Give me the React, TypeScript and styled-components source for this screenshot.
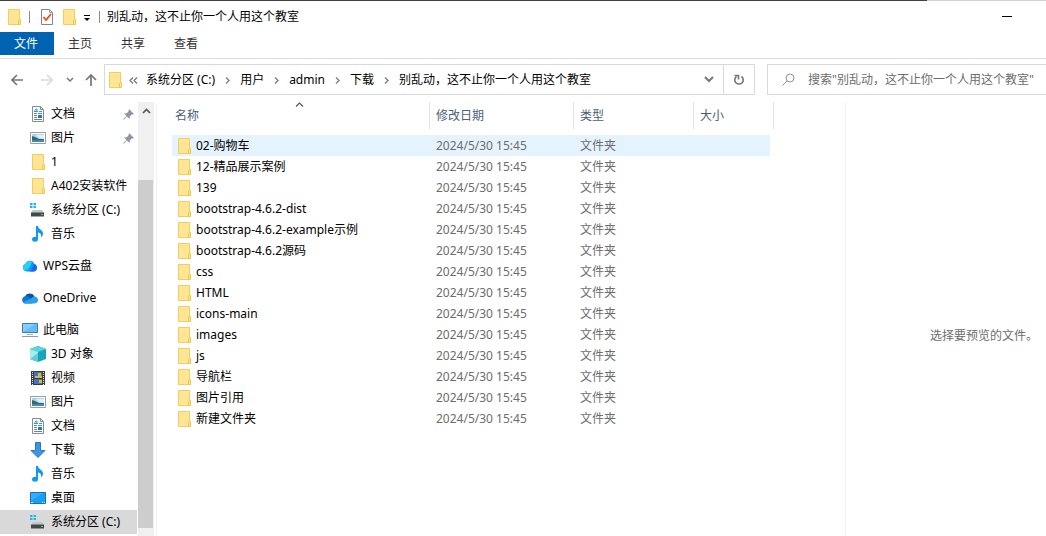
import React from "react";
import styled, { createGlobalStyle } from "styled-components";

const GlobalStyle = createGlobalStyle`
  * { box-sizing: border-box; }
  body {
    margin: 0;
    background: #fff;
    color: #000;
    font: 12px/16px "Noto Sans", "Noto Sans CJK SC", sans-serif;
  }
  button, input { font: inherit; color: inherit; }
  svg { display: block; flex: none; }
`;

const Window = styled.div`
  display: flex;
  flex-direction: column;
  min-height: 100vh;
  overflow: hidden;
`;

const TopEdge = styled.div`
  height: 1px;
  background: #d2d2d2;
  &::before {
    content: "";
    display: block;
    height: 1px;
    margin-right: 119px;
    background: #404040;
  }
`;

const TitleBar = styled.header`
  display: flex;
  align-items: center;
  height: 31px;
  padding-left: 6px;
`;

const Separator = styled.span<{ $left: number; $right: number }>`
  width: 1px;
  height: 12px;
  margin: 0 ${(p) => p.$right}px 0 ${(p) => p.$left}px;
  background: #8c8c8c;
`;

const IconButton = styled.button<{ $width: number; $color?: string }>`
  display: flex;
  align-items: center;
  justify-content: center;
  flex: none;
  width: ${(p) => p.$width}px;
  align-self: stretch;
  padding: 0;
  border: 0;
  background: none;
  color: ${(p) => p.$color ?? "#777"};
`;

const Title = styled.h1`
  flex: 1;
  margin: 0;
  font-size: 12px;
  font-weight: 400;
  white-space: nowrap;
`;

const Ribbon = styled.nav`
  display: flex;
  height: 27px;
  padding-bottom: 3px;
  border-bottom: 1px solid #dadbdc;
`;

const RibbonTab = styled.button<{ $primary?: boolean }>`
  padding: 0 15px 0 14px;
  border: 0;
  background: ${(p) => (p.$primary ? "#0063b1" : "none")};
  color: ${(p) => (p.$primary ? "#fff" : "#333")};
  &:first-child { padding-right: 16px; }
`;

const NavBar = styled.div`
  display: flex;
  height: 43px;
  padding: 5px 0 7px 2px;
`;

const AddressBar = styled.div`
  display: flex;
  flex: 1;
  align-items: center;
  min-width: 0;
  padding-left: 2px;
  border: 1px solid #d9d9d9;
`;

const Crumbs = styled.ol`
  display: flex;
  flex: 1;
  align-items: center;
  min-width: 0;
  margin: 0;
  padding: 0;
  list-style: none;
  white-space: nowrap;
`;

const Crumb = styled.li`
  display: flex;
  align-items: center;
  a { color: #000; text-decoration: none; }
  svg { margin: 2px 8px 0; }
  &:first-child svg { margin-left: 6px; }
`;

const RefreshCell = styled.div`
  display: flex;
  align-self: stretch;
  border-left: 1px solid #d9d9d9;
`;

const SearchBox = styled.label`
  display: flex;
  align-items: center;
  gap: 13px;
  width: 279px;
  margin-left: 12px;
  padding-left: 14px;
  border: 1px solid #d9d9d9;
  border-right: 0;
  input {
    flex: 1;
    min-width: 0;
    padding: 0;
    border: 0;
    outline: 0;
    background: none;
  }
  input::placeholder { color: #6d6d6d; opacity: 1; }
`;

const Body = styled.div`
  display: flex;
  flex: 1;
`;

const Tree = styled.nav`
  width: 138px;
  padding-right: 1px;
`;

const TreeGroup = styled.ul`
  margin: 0 0 8px;
  padding: 0;
  list-style: none;
  &:last-child { margin-bottom: 0; }
`;

const TreeLink = styled.a<{ $root?: boolean; $selected?: boolean }>`
  display: flex;
  align-items: center;
  gap: 5px;
  height: 24px;
  padding: 0 3px 0 ${(p) => (p.$root ? 22 : 30)}px;
  background: ${(p) => (p.$selected ? "#d9d9d9" : "none")};
  color: #000;
  text-decoration: none;
  white-space: nowrap;
`;

const TreeLabel = styled.span`
  flex: 1;
`;

const Scrollbar = styled.div`
  display: flex;
  flex-direction: column;
  width: 16px;
  background: #f0f0f0;
`;

const ScrollUp = styled.button`
  display: flex;
  align-items: center;
  justify-content: center;
  height: 18px;
  padding: 0;
  border: 0;
  background: none;
`;

const Thumb = styled.div`
  flex: 1;
  margin: 60px 1px 8px 0;
  background: #cdcdcd;
`;

const Files = styled.main`
  flex: 1;
  min-width: 0;
  margin-left: 2px;
  padding-left: 15px;
  border-left: 1px solid #f3f3f3;
`;

const FileTable = styled.table`
  width: 602px;
  table-layout: fixed;
  border-collapse: separate;
  border-spacing: 0;
  tbody::before {
    content: "";
    display: block;
    height: 6px;
  }
`;

const HeadCell = styled.th<{ $width: number; $first?: boolean }>`
  position: relative;
  width: ${(p) => p.$width}px;
  height: 27px;
  padding: 0 0 0 ${(p) => (p.$first ? 3 : 6)}px;
  border-right: 1px solid #e2e2e2;
  color: #4c607a;
  font-weight: 400;
  text-align: left;
`;

const SortMark = styled.span`
  position: absolute;
  top: 0;
  left: 50%;
  margin-left: -6px;
`;

const FileRow = styled.tr<{ $active: boolean }>`
  td { background-color: ${(p) => (p.$active ? "#e5f3ff" : "transparent")}; }
`;

const Cell = styled.td`
  height: 21px;
  padding: 0 0 0 6px;
  color: #6d6d6d;
  background-clip: padding-box;
  &:last-child { border-right: 4px solid transparent; }
`;

const NameCell = styled(Cell)`
  padding-left: 4px;
  color: #000;
`;

const FileName = styled.div`
  display: flex;
  align-items: center;
  gap: 4px;
`;

const Preview = styled.aside`
  display: flex;
  align-items: center;
  width: 201px;
  padding: 34px 0 0 84px;
  border-left: 1px solid #f3f3f3;
  color: #6d6d6d;
  white-space: nowrap;
`;

const Icon = ({ children, w = 16, h = 16 }: { children: React.ReactNode; w?: number; h?: number }) => (
  <svg width={w} height={h} viewBox={`0 0 ${w} ${h}`} fill="none" aria-hidden="true">
    {children}
  </svg>
);

const FolderIcon = () => (
  <Icon>
    <path d="M2.5.5h11v15h-11z" fill="#ffe594" stroke="#f0cf5f" />
    <path d="M12.5 15.5v-4l1-1h1v5z" fill="#ffe594" stroke="#e9c64c" />
  </Icon>
);

const CheckedPageIcon = () => (
  <Icon>
    <path d="M2.5.5h8l3 3v12h-11z" fill="#fff" stroke="#858585" />
    <path d="M10.5.5v3h3" stroke="#a0a0a0" />
    <path d="M4.5 8l2.500 3 5-6" stroke="#e8501e" strokeWidth="1.800" />
  </Icon>
);

const DocIcon = () => (
  <Icon>
    <path d="M2.5.5h8l3 3v12h-11z" fill="#fff" stroke="#858b90" />
    <path d="M10.5.5v3h3" stroke="#858b90" />
    <path d="M4 6l2-3h1v3M4 5.500h4M4 7.500h3M8 7.500h4M9 5.500h3" stroke="#3d94c5" />
    <path d="M8 9h4v3h-4z" fill="#2d78b4" />
    <path d="M4 9.500h3M4 11.500h3M4 13.500h8" stroke="#75838e" />
  </Icon>
);

const PictureIcon = () => (
  <Icon>
    <path d="M.5 2.500h15v11H.5z" fill="#fff" stroke="#9a9ea2" />
    <path d="M2 4h12v8H2z" fill="#a9d4f5" />
    <path d="M6 5h8v4l-5-1z" fill="#e2f2fb" />
    <path d="M2 6l3 1 4 2 5 0v1H2z" fill="#366a66" />
    <path d="M2 10h12v2H2z" fill="#4287b9" />
  </Icon>
);

const DriveIcon = () => (
  <Icon>
    <path d="M0 1h2.500v2H0zM3.500 1H6v2H3.500zM0 4h2.500v2H0zM3.500 4H6v2H3.500z" fill="#19b5f1" />
    <path d="M3 8h9l2 3H1z" fill="#c4c7c9" />
    <path d="M1 10.500h13v4H1z" fill="#44484b" />
    <path d="M11 12h2v1h-2z" fill="#43e24b" />
  </Icon>
);

const MusicIcon = () => (
  <Icon>
    <ellipse cx="5" cy="13.200" rx="3" ry="2.500" fill="#1597ea" />
    <path d="M6 0h2c0 3 5 3.500 5 7.500 0 2-.8 3-2 4 .8-3-.7-4.500-3-5V13H6z" fill="#1597ea" />
  </Icon>
);

const WpsIcon = () => (
  <Icon>
    <path d="M5 13.500a4 4 0 0 1-1.500-7.700A4.700 4.700 0 0 1 12.300 6a3.900 3.900 0 0 1-.3 7.500z" fill="#1593fa" />
    <path d="M3.500 5.800A4.700 4.700 0 0 1 10 3.500C8.500 8 7 12 2.500 12.700a4 4 0 0 1 1-6.900z" fill="#27d0f5" />
    <path d="M12.300 6a3.900 3.900 0 0 1-.3 7.500H7c4-1 3-5.500 5.300-7.500z" fill="#1768ee" />
  </Icon>
);

const OneDriveIcon = () => (
  <Icon>
    <path d="M3 7a5 5 0 0 1 9.500 0L8 11z" fill="#0a55a5" />
    <path d="M3.800 13.500A3.700 3.700 0 1 1 6 6.800L13 11l-3 2.500z" fill="#0f78d2" />
    <path d="M1 12.200L9.500 8.200A3.500 3.500 0 1 1 12.500 13.500h-9c-1 0-2-.5-2.500-1.300z" fill="#28a0ea" />
  </Icon>
);

const ComputerIcon = () => (
  <Icon>
    <path d="M.5 1.500h15v9H.5z" fill="#64bdf8" stroke="#3b7fab" />
    <path d="M1 10V2h12z" fill="#83cefb" />
    <path d="M5 12.500h6" stroke="#a4b1ba" />
    <path d="M0 14.500h16" stroke="#8e9ba3" />
  </Icon>
);

const CubeIcon = () => (
  <Icon>
    <path d="M8 0l8 3v10l-8 3-8-3V3z" fill="#18a5bb" />
    <path d="M8 0l8 3-8 3-8-3z" fill="#5bd3e0" />
    <path d="M0 3l8 3v10l-8-3z" fill="#a3edf0" />
    <path d="M0 13l8-6v9z" fill="#60cbd6" />
  </Icon>
);

const VideoIcon = () => (
  <Icon>
    <path d="M1 1h14v14H1z" fill="#3b3b3b" />
    <path d="M4 2h8v6H4zM4 9h8v5H4z" fill="#3975cf" />
    <path d="M8 3h3v3H8zM5 6h7v2H5zM9 10h3v3H9z" fill="#e4b928" />
    <path d="M2.500 2v13M13.500 2v13" stroke="#e8e8e8" strokeDasharray="1 1" />
  </Icon>
);

const DownloadIcon = () => (
  <Icon>
    <path d="M5.500.5h5v8h4.500L8 15.500 1 8.500h4.500z" fill="#3d94e4" stroke="#3077ba" />
  </Icon>
);

const DesktopIcon = () => (
  <Icon>
    <path d="M.5 2.500h15v11H.5z" fill="#1b9cf5" stroke="#0c75bd" />
    <path d="M1 11V3h12z" fill="#35adff" />
    <path d="M1 12.500h2M12 12.500h1M14 12.500h1" stroke="#fff" />
  </Icon>
);

const PinIcon = () => (
  <Icon w={11} h={11}>
    <path d="M6 0l5 5-1.500.5-1 .2-1.700 1.800L6.500 10 4 7.500.7 10.700l-.5-.4L3.500 7 1 4.500l2.700-.3L5.500 2.500z" fill="#8b98a4" />
  </Icon>
);

const Chevron = () => (
  <Icon w={9} h={9}>
    <path d="M3 1.500l3 3-3 3" stroke="#858585" strokeWidth="1.500" />
  </Icon>
);

type TreeItem = { label: string; icon: React.ReactNode; root?: boolean; pinned?: boolean; selected?: boolean };

const tree: TreeItem[][] = [
  [
    { label: "文档", icon: <DocIcon />, pinned: true },
    { label: "图片", icon: <PictureIcon />, pinned: true },
    { label: "1", icon: <FolderIcon /> },
    { label: "A402安装软件", icon: <FolderIcon /> },
    { label: "系统分区 (C:)", icon: <DriveIcon /> },
    { label: "音乐", icon: <MusicIcon /> },
  ],
  [{ label: "WPS云盘", icon: <WpsIcon />, root: true }],
  [{ label: "OneDrive", icon: <OneDriveIcon />, root: true }],
  [
    { label: "此电脑", icon: <ComputerIcon />, root: true },
    { label: "3D 对象", icon: <CubeIcon /> },
    { label: "视频", icon: <VideoIcon /> },
    { label: "图片", icon: <PictureIcon /> },
    { label: "文档", icon: <DocIcon /> },
    { label: "下载", icon: <DownloadIcon /> },
    { label: "音乐", icon: <MusicIcon /> },
    { label: "桌面", icon: <DesktopIcon /> },
    { label: "系统分区 (C:)", icon: <DriveIcon />, selected: true },
  ],
];

const folderTitle = "别乱动，这不止你一个人用这个教室";
const crumbs = ["系统分区 (C:)", "用户", "admin", "下载", folderTitle];

const files = [
  "02-购物车",
  "12-精品展示案例",
  "139",
  "bootstrap-4.6.2-dist",
  "bootstrap-4.6.2-example示例",
  "bootstrap-4.6.2源码",
  "css",
  "HTML",
  "icons-main",
  "images",
  "js",
  "导航栏",
  "图片引用",
  "新建文件夹",
];

export default function App() {
  return (
    <Window lang="zh-CN">
      <GlobalStyle />
      <TopEdge />
      <TitleBar>
        <FolderIcon />
        <Separator $left={7} $right={9} />
        <IconButton $width={16} aria-label="属性"><CheckedPageIcon /></IconButton>
        <IconButton $width={28} aria-label="新建文件夹"><FolderIcon /></IconButton>
        <IconButton $width={8} $color="#000" aria-label="自定义快速访问工具栏">
          <Icon w={8} h={8}>
            <path d="M1 2.500h6" stroke="currentColor" />
            <path d="M1 5h6L4 8z" fill="currentColor" />
          </Icon>
        </IconButton>
        <Separator $left={8} $right={7} />
        <Title>{folderTitle}</Title>
        <IconButton $width={78} $color="#000" aria-label="最小化">
          <Icon w={10} h={1}><path d="M0 .5h10" stroke="currentColor" /></Icon>
        </IconButton>
      </TitleBar>

      <Ribbon aria-label="功能区">
        <RibbonTab $primary>文件</RibbonTab>
        <RibbonTab>主页</RibbonTab>
        <RibbonTab>共享</RibbonTab>
        <RibbonTab>查看</RibbonTab>
      </Ribbon>

      <NavBar>
        <IconButton $width={30} aria-label="返回">
          <Icon w={12} h={12}><path d="M12 6H1M6 1L1 6l5 5" stroke="currentColor" strokeWidth="1.700" /></Icon>
        </IconButton>
        <IconButton $width={30} $color="#d9d9d9" aria-label="前进">
          <Icon w={12} h={12}><path d="M0 6h11M6 1l5 5-5 5" stroke="currentColor" strokeWidth="1.700" /></Icon>
        </IconButton>
        <IconButton $width={16} aria-label="最近浏览的位置">
          <Icon w={8} h={6}><path d="M1 1l3 3 3-3" stroke="currentColor" strokeWidth="1.500" /></Icon>
        </IconButton>
        <IconButton $width={26} aria-label="上移">
          <Icon w={12} h={12}><path d="M6 12V1M1 6l5-5 5 5" stroke="currentColor" strokeWidth="1.700" /></Icon>
        </IconButton>
        <AddressBar>
          <FolderIcon />
          <Crumbs>
            <Crumb>
              <Icon w={9} h={9}><path d="M4 1.500l-3 3 3 3M8 1.500l-3 3 3 3" stroke="#757575" strokeWidth="1.300" /></Icon>
            </Crumb>
            {crumbs.map((name, i) => (
              <Crumb key={name}>
                <a href="#">{name}</a>
                {i < crumbs.length - 1 && <Chevron />}
              </Crumb>
            ))}
          </Crumbs>
          <IconButton $width={28} aria-label="以前的位置">
            <Icon w={10} h={7}><path d="M1 1l4 4 4-4" stroke="currentColor" strokeWidth="2" /></Icon>
          </IconButton>
          <RefreshCell>
            <IconButton $width={30} aria-label="刷新">
              <Icon w={12} h={12}>
                <path d="M8.500 2.500a4.200 4.200 0 1 1-5 0" stroke="currentColor" strokeWidth="1.600" />
                <path d="M1.500 1.500h4v4" stroke="currentColor" strokeWidth="1.600" />
              </Icon>
            </IconButton>
          </RefreshCell>
        </AddressBar>
        <SearchBox>
          <Icon w={13} h={13}>
            <circle cx="8" cy="5" r="4" stroke="#8a929c" />
            <path d="M5 8l-4.500 4.500" stroke="#8a929c" />
          </Icon>
          <input type="search" aria-label="搜索" placeholder={`搜索"${folderTitle}"`} />
        </SearchBox>
      </NavBar>

      <Body>
        <Tree aria-label="导航窗格">
          {tree.map((group, g) => (
            <TreeGroup key={g}>
              {group.map((item) => (
                <li key={item.label}>
                  <TreeLink href="#" $root={item.root} $selected={item.selected}>
                    {item.icon}
                    <TreeLabel>{item.label}</TreeLabel>
                    {item.pinned && <PinIcon />}
                  </TreeLink>
                </li>
              ))}
            </TreeGroup>
          ))}
        </Tree>
        <Scrollbar>
          <ScrollUp aria-label="向上滚动">
            <Icon w={9} h={6}><path d="M1 5l3.500-3.500L8 5" stroke="#555" strokeWidth="1.700" /></Icon>
          </ScrollUp>
          <Thumb />
        </Scrollbar>
        <Files>
          <FileTable>
            <thead>
              <tr>
                <HeadCell $width={258} $first scope="col">
                  名称
                  <SortMark>
                    <Icon w={9} h={5}><path d="M1 4.500L4.500 1 8 4.500" stroke="#555" strokeWidth="1.200" /></Icon>
                  </SortMark>
                </HeadCell>
                <HeadCell $width={144} scope="col">修改日期</HeadCell>
                <HeadCell $width={120} scope="col">类型</HeadCell>
                <HeadCell $width={80} scope="col">大小</HeadCell>
              </tr>
            </thead>
            <tbody>
              {files.map((name, i) => (
                <FileRow key={name} $active={i === 0}>
                  <NameCell>
                    <FileName><FolderIcon />{name}</FileName>
                  </NameCell>
                  <Cell>2024/5/30 15:45</Cell>
                  <Cell>文件夹</Cell>
                  <Cell />
                </FileRow>
              ))}
            </tbody>
          </FileTable>
        </Files>
        <Preview>选择要预览的文件。</Preview>
      </Body>
    </Window>
  );
}
